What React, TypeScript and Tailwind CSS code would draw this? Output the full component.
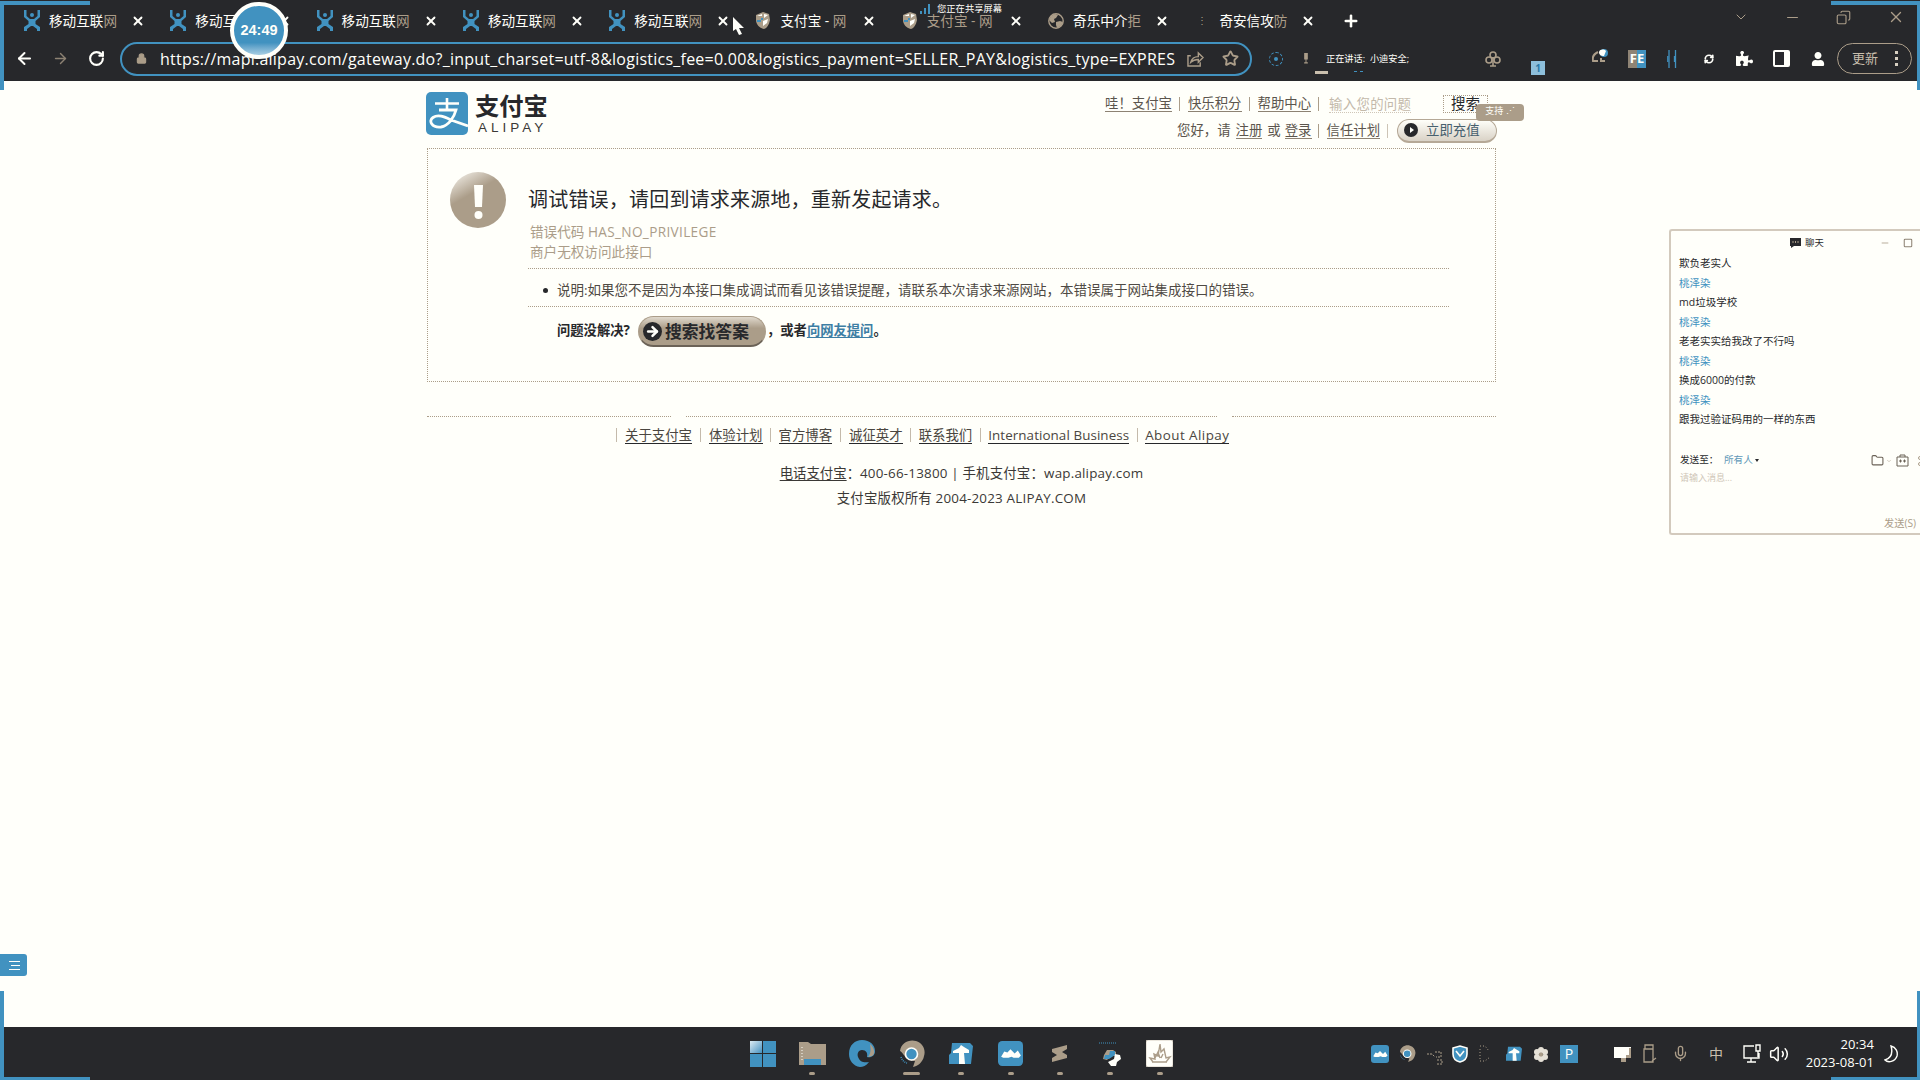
import React from "react";
import {
  ArrowLeft, ArrowRight, RotateCw, X, Plus, Minus, ChevronDown, Lock, Star, Volume2,
  Square, Copy, RefreshCw, Folder, Scissors, Mic,
} from "lucide-react";
import { FaPuzzlePiece, FaUser } from "react-icons/fa";

const sans = "font-['Open_Sans','Noto_Sans_CJK_SC',sans-serif]";

function PersonMark() {
  return (
    <svg viewBox="0 0 16 21" className="h-[21px] w-4 shrink-0">
      <path d="M0 0h2.500v6l3.500 3h4l3.500-3V0H16v7l-4.500 4v3l4.500 3v4h-3v-2l-4-3H7l-4 3v2H0v-4l4.500-3v-3L0 7z" fill="#4192c0" />
      <circle cx="8" cy="5" r="2" fill="#4192c0" />
    </svg>
  );
}

function GlobeMark() {
  return (
    <svg viewBox="0 0 16 16" className="h-4 w-4 shrink-0">
      <circle cx="8" cy="8" r="7.2" fill="#27282b" stroke="#ab9d89" strokeWidth="1.4" />
      <path d="M1 7l2-4 4-2 3 1-2 3-2 1 1 3-3 1zM8 9l4-1 3 1-2 4-4 2-1-3z" fill="#ab9d89" />
    </svg>
  );
}

function ShieldMark() {
  return (
    <svg viewBox="0 0 16 17" className="h-[17px] w-4 shrink-0">
      <path d="M1 3l7-3 6 2 1 6c-1 5-3 8-6 9-5-1-8-5-8-9z" fill="#ab9d89" />
      <path d="M2 4l5-2v2H2zM9 2l4 1-4 3zM8 9l5-2-1 4-4 3z" fill="#fffffa" />
      <path d="M2 8h4v2H2zM6 6h2v2H6z" fill="#4192c0" />
    </svg>
  );
}

const tabs = [
  { t: "移动互联", e: "网", i: "person" },
  { t: "移动互联", e: "网", i: "person" },
  { t: "移动互联", e: "网", i: "person" },
  { t: "移动互联", e: "网", i: "person" },
  { t: "移动互联", e: "网", i: "person" },
  { t: "支付宝 - ", e: "网", i: "shield" },
  { t: "支付宝 - ", e: "网", i: "shield" },
  { t: "奇乐中介", e: "拒", i: "globe" },
  { t: "奇安信攻", e: "防", i: "none" },
];

function TabStrip() {
  return (
    <div className="flex h-[41px] items-center pl-[24px]">
      {tabs.map((tab, k) => (
        <div key={k} className="flex w-[146.3px] shrink-0 items-center">
          {tab.i === "person" && <PersonMark />}
          {tab.i === "shield" && <ShieldMark />}
          {tab.i === "globe" && <GlobeMark />}
          {tab.i === "none" && <span className="w-4 text-center text-[10px] text-[#ab9d89]">⋮</span>}
          <div className={k === 6 ? "ml-[9px] w-[69px] whitespace-pre text-[13.6px] leading-5 text-[#ab9d89]" : "ml-[9px] w-[69px] whitespace-pre text-[13.6px] leading-5 text-[#fffffa]"}>
            {tab.t}
            <span className="text-[#ab9d89]">{tab.e}</span>
          </div>
          <X className="ml-[13px] h-[14px] w-[14px] text-[#fffffa]" strokeWidth={3.2} />
        </div>
      ))}
      <Plus className="ml-[1px] h-[18px] w-[18px] text-[#fffffa]" strokeWidth={3.4} />
      <div className="mb-[7px] ml-auto flex items-center pr-[15px] text-[#ab9d89]">
        <ChevronDown className="h-4 w-4" strokeWidth={1.5} />
        <Minus className="ml-[35px] h-[17px] w-[17px]" strokeWidth={1.5} />
        <Copy className="ml-[35px] h-[15px] w-[15px] -scale-x-100" strokeWidth={1.8} />
        <X className="ml-[36px] h-[18px] w-[18px]" strokeWidth={1.8} />
      </div>
    </div>
  );
}

function Toolbar() {
  return (
    <div className="flex h-[40px] items-center pb-[5px] pl-[15px]">
      <ArrowLeft className="h-[19px] w-[19px] text-[#fffffa]" strokeWidth={2.5} />
      <ArrowRight className="ml-[18px] h-[17px] w-[17px] text-[#8d8273]" strokeWidth={2} />
      <RotateCw className="ml-[19px] h-[17px] w-[17px] text-[#fffffa]" strokeWidth={3} />
      <div className="ml-[15px] flex h-[34px] w-[1132px] shrink-0 items-center rounded-full border-2 border-[#4192c0] pl-[14px]">
        <Lock className="h-[13px] w-[11px] text-[#ab9d89]" fill="#ab9d89" strokeWidth={2.5} />
        <span className="ml-[13px] w-[1018px] whitespace-nowrap text-[16px] leading-5 tracking-[0.24px] text-[#fffffa]">
          https://mapi.alipay.com/gateway.do?_input_charset=utf-8&amp;logistics_fee=0.00&amp;logistics_payment=SELLER_PAY&amp;logistics_type=EXPRES
        </span>
        <svg viewBox="0 0 18 17" className="ml-[9px] h-[16px] w-[17px] shrink-0" fill="none" stroke="#ab9d89" strokeWidth="1.5">
          <path d="M4 5H1v11h13v-4" />
          <path d="M4 12c1-4 4-6 8-6V2l5 5-5 5V9c-4 0-6 1-8 3z" />
        </svg>
        <Star className="ml-[18px] h-[17px] w-[17px] shrink-0 text-[#ab9d89]" strokeWidth={2.6} />
      </div>
      <div className="ml-[17px] flex h-[14px] w-[14px] shrink-0 items-center justify-center rounded-full border border-dashed border-[#4192c0]">
        <div className="h-1 w-1 rounded-full bg-[#4192c0]" />
      </div>
      <svg viewBox="0 0 6 12" className="ml-[20px] h-[11px] w-[6px] shrink-0" fill="#ab9d89">
        <path d="M1 0h4v7H1zM2.500 7h1v3h-1zM1 10h4v1.500H1z" />
      </svg>
      <span className="ml-[17px] w-[84px] shrink-0 whitespace-nowrap text-[9.2px] leading-4 text-[#fffffa]">
        正在讲话:&nbsp; 小迪安全;
      </span>
      <svg viewBox="0 0 16 16" className="ml-[75px] h-4 w-4 shrink-0" fill="none" stroke="#ab9d89" strokeWidth="1.6">
        <circle cx="8" cy="4" r="3" />
        <circle cx="4" cy="9" r="3" />
        <circle cx="12" cy="9" r="3" />
        <path d="M8 6v9M5 15h6" />
      </svg>
      <div className="mt-[19px] ml-[30px] flex h-[14px] w-[14px] shrink-0 items-center justify-center bg-[#8dbfdb] text-[10px] font-bold text-[#2b78a8]">1</div>
      <svg viewBox="0 0 18 14" className="mb-[6px] ml-[47px] h-[14px] w-[18px] shrink-0">
        <path d="M6 3C2 5 0 8 1 12h5M9 9v3h4" fill="none" stroke="#ab9d89" strokeWidth="2" />
        <circle cx="12" cy="4" r="4" fill="#4192c0" />
        <path d="M7 3c1-3 5-3 7-1l-2 5c-3 0-5-1-5-4z" fill="#fffffa" />
      </svg>
      <div className="ml-[18px] flex h-[18px] w-[18px] shrink-0 items-center justify-center bg-gradient-to-r from-[#8f8475] from-50% to-[#4192c0] to-50% text-[13px] leading-none font-bold text-[#fffffa]">FE</div>
      <svg viewBox="0 0 10 18" className="ml-[21px] h-[18px] w-[10px] shrink-0" stroke="#4192c0" strokeWidth="1.3">
        <path d="M2 0v18M8.500 0v18" />
        <path d="M.8 6v6M7.500 6v6" />
      </svg>
      <RefreshCw className="ml-[27px] h-[10px] w-[10px] shrink-0 text-[#fffffa]" strokeWidth={4} />
      <FaPuzzlePiece className="ml-[22px] h-[17px] w-[17px] shrink-0 text-[#fffffa]" />
      <div className="ml-[20px] h-[17px] w-[17px] shrink-0 rounded-[2px] border-2 border-r-[6px] border-[#fffffa]" />
      <FaUser className="ml-[21px] h-[14px] w-[14px] shrink-0 text-[#fffffa]" />
      <div className="ml-[12px] flex h-[31px] w-[75px] shrink-0 items-center rounded-full border border-[#ab9d89] pl-[14px] text-[13px] text-[#c9bfae]">
        更新
        <div className="ml-[17px] flex flex-col gap-[3px]">
          <i className="h-[3px] w-[3px] bg-[#d8d0c2]" />
          <i className="h-[3px] w-[3px] bg-[#d8d0c2]" />
          <i className="h-[3px] w-[3px] bg-[#d8d0c2]" />
        </div>
      </div>
    </div>
  );
}

function AlipayLogo() {
  return (
    <div className="flex w-[124px] shrink-0 items-start pt-[11px]">
      <svg viewBox="0 0 42 43" className="-ml-[1px] h-[43px] w-[42px] shrink-0">
        <rect width="42" height="43" rx="5" fill="#4192c0" />
        <g fill="none" stroke="#fffffa">
          <path d="M9 11.500h24M21 6v11" strokeWidth="2.600" />
          <path d="M13 18h17c-2 8-8 16-15 17-9 1-13-6-8-9.500 5-3.500 11-1 18 2.500l17 6" strokeWidth="2.800" />
        </g>
      </svg>
      <div className="ml-[7px] flex flex-col">
        <span className="mt-[1px] whitespace-nowrap text-[24.3px] leading-[26px] font-bold text-[#27282b]">支付宝</span>
        <span className="ml-[3px] font-['Liberation_Sans',sans-serif] text-[13.5px] leading-[17px] tracking-[4px] text-[#3b3936]">ALIPAY</span>
      </div>
    </div>
  );
}

function Bar({ className }: { className: string }) {
  return <i className={"h-[14px] w-px shrink-0 bg-[#ab9d89] " + className} />;
}

const headLink = "shrink-0 border-b border-[#8d8273] leading-[15px] whitespace-nowrap";

function PageHeader() {
  return (
    <div className="flex h-[67px] justify-between">
      <AlipayLogo />
      <div className="relative flex w-[391px] flex-col text-[13.4px] text-[#5b554d]">
        <div className="mt-[12px] flex h-[22px] items-center">
          <span className={headLink}>哇！支付宝</span>
          <Bar className="ml-[7px]" />
          <span className={"ml-[8px] " + headLink}>快乐积分</span>
          <Bar className="ml-[7px]" />
          <span className={"ml-[8px] " + headLink}>帮助中心</span>
          <Bar className="ml-[7px]" />
          <span className="ml-[10px] w-[82px] border-b border-dotted border-[#cfc6b8] leading-[16px] tracking-[0.3px] whitespace-nowrap text-[#c3b9aa]">输入您的问题</span>
          <span className="ml-[32px] w-[45px] border border-dotted border-[#ab9d89] pl-[7px] text-[14.5px] leading-[16px] text-[#27282b]">搜索</span>
        </div>
        <div className="mt-[4px] flex h-[23px] items-center pl-[72px]">
          <span className="whitespace-nowrap">您好，请</span>
          <span className={"ml-[5px] " + headLink}>注册</span>
          <span className="ml-[5px]">或</span>
          <span className={"ml-[4px] " + headLink}>登录</span>
          <Bar className="ml-[6px]" />
          <span className={"ml-[8px] " + headLink}>信任计划</span>
          <Bar className="ml-[7px] opacity-60" />
          <div className="ml-[9px] flex h-[24px] w-[100px] shrink-0 items-center rounded-full border border-b-2 border-[#b5a896] bg-gradient-to-b from-[#fffffa] to-[#d9d2c6] pl-[6px]">
            <span className="flex h-[14px] w-[14px] items-center justify-center rounded-full bg-[#27282b]">
              <i className="ml-[1px] h-0 w-0 border-y-[3.5px] border-l-[4px] border-y-transparent border-l-[#fffffa]" />
            </span>
            <span className="ml-[8px] text-[#47606e]">立即充值</span>
          </div>
        </div>
        <div className="absolute top-[23px] left-[371px] h-[17px] w-[48px] rounded-[4px] bg-[#ab9d89] text-center text-[9px] leading-[14px] text-[#fffffa]">
          支持 ⋰
        </div>
      </div>
    </div>
  );
}

function ErrorPanel() {
  return (
    <div className="h-[234px] border border-dotted border-[#ab9d89] pt-[23px] pl-[22px]">
      <div className="flex">
        <svg viewBox="0 0 56 56" className="h-[56px] w-[56px] shrink-0">
          <defs>
            <linearGradient id="disc" x1="0.25" y1="0" x2="0.45" y2="0.35">
              <stop offset="0" stopColor="#e9e4db" />
              <stop offset="1" stopColor="#ab9d89" />
            </linearGradient>
          </defs>
          <circle cx="28" cy="28" r="28" fill="url(#disc)" />
          <path d="M24 13h9l-1 22h-7z" fill="#fffffa" />
          <circle cx="28.500" cy="43" r="4" fill="#fffffa" />
        </svg>
        <div className="ml-[22px] w-[921px]">
          <h1 className="mt-[13px] text-[20px] leading-[30px] tracking-[0.2px] text-[#27282b]">
            调试错误，请回到请求来源地，重新发起请求。
          </h1>
          <div className="mt-[7px] h-[47px] border-b border-dotted border-[#ab9d89] pl-[2px] text-[13.6px] leading-[20px] text-[#ab9d89]">
            <p>错误代码 <span className="tracking-[0.35px]">HAS_NO_PRIVILEGE</span></p>
            <p>商户无权访问此接口</p>
          </div>
          <div className="flex h-[38px] items-center border-b border-dotted border-[#ab9d89] pt-[5px] pl-[15px] text-[13.5px] text-[#4f4a44]">
            <i className="h-[5px] w-[5px] rounded-full bg-[#27282b]" />
            <span className="ml-[9px] whitespace-nowrap">
              说明:如果您不是因为本接口集成调试而看见该错误提醒，请联系本次请求来源网站，本错误属于网站集成接口的错误。
            </span>
          </div>
          <div className="mt-[8px] flex items-center pl-[29px] text-[13.3px] font-bold text-[#27282b]">
            <span className="w-[81px] whitespace-nowrap">问题没解决?</span>
            <div className="mt-[1px] flex h-[31px] w-[128px] items-center rounded-full border border-[#ab9d89] border-b-2 border-b-[#6b6257] bg-gradient-to-b from-[#e0d9cd] to-[#ab9d89] to-40% pl-[4px]">
              <span className="flex h-[19px] w-[19px] items-center justify-center rounded-full bg-[#27282b]">
                <ArrowRight className="h-[15px] w-[15px] text-[#fffffa]" strokeWidth={4} />
              </span>
              <span className="ml-[3px] pt-[1px] text-[16.8px] whitespace-nowrap">搜索找答案</span>
            </div>
            <span className="ml-[1px] whitespace-nowrap">
              ，或者<span className="text-[#3d7ea4] underline decoration-1 underline-offset-2">向网友提问</span>。
            </span>
          </div>
        </div>
      </div>
    </div>
  );
}

const footLink = "border-b border-[#27282b] leading-[16px] whitespace-nowrap";

function PageFooter() {
  return (
    <div className="mt-[34px] text-[13.4px] text-[#4a4640]">
      <div className="flex gap-[15px]">
        <i className="h-px w-[244px] border-t border-dotted border-[#ab9d89]" />
        <i className="h-px flex-1 border-t border-dotted border-[#ab9d89]" />
        <i className="h-px w-[264px] border-t border-dotted border-[#ab9d89]" />
      </div>
      <div className="mt-[7px] flex h-[22px] items-center pl-[189px]">
        <Bar className="mr-[8px] opacity-70" />
        <span className={footLink}>关于支付宝</span>
        <Bar className="mx-[8px] opacity-70" />
        <span className={footLink}>体验计划</span>
        <Bar className="mr-[8px] ml-[7px] opacity-70" />
        <span className={footLink}>官方博客</span>
        <Bar className="mx-[8px] opacity-70" />
        <span className={footLink}>诚征英才</span>
        <Bar className="mx-[7.5px] opacity-70" />
        <span className={footLink}>联系我们</span>
        <Bar className="mx-[7.5px] opacity-70" />
        <span className={footLink + " tracking-[0.08px]"}>International Business</span>
        <Bar className="mx-[7.5px] opacity-70" />
        <span className={footLink + " tracking-[0.45px]"}>About Alipay</span>
      </div>
      <p className="mt-[15px] text-center leading-[24px] text-[#3b3936]">
        <span className="underline underline-offset-2">电话支付宝</span>：<span className="tracking-[0.2px]">400-66-13800 | 手机支付宝：wap.alipay.com</span>
      </p>
      <p className="mt-[1px] text-center leading-[24px] tracking-[0.2px] text-[#3b3936]">支付宝版权所有 2004-2023 ALIPAY.COM</p>
    </div>
  );
}

const messages = [
  { m: "欺负老实人" },
  { n: "桃泽染" },
  { m: "md垃圾学校" },
  { n: "桃泽染" },
  { m: "老老实实给我改了不行吗" },
  { n: "桃泽染" },
  { m: "换成6000的付款" },
  { n: "桃泽染" },
  { m: "跟我过验证码用的一样的东西" },
];

function ChatWindow() {
  return (
    <div className="absolute top-[229px] left-[1669px] flex h-[306px] w-[251px] flex-col overflow-hidden rounded-l-[3px] border-2 border-r-0 border-[#d3cabd] bg-[#fffffa] text-[#27282b]">
      <div className="flex h-[23px] items-center pl-[119px]">
        <svg viewBox="0 0 11 10" className="h-[10px] w-[11px]">
          <path d="M0 0h11v8H4l-3 2V8H0z" fill="#27282b" />
          <path d="M3 3v2M5.500 3v2M8 3v2" stroke="#ab9d89" />
        </svg>
        <span className="ml-[4px] w-[75px] pt-px text-[9.4px]">聊天</span>
        <Minus className="h-[10px] w-[10px] text-[#ab9d89]" />
        <Square className="ml-[13px] h-[10px] w-[10px] text-[#8d8273]" strokeWidth={2.5} />
      </div>
      <div className="flex flex-col pl-[8px] text-[10.5px]">
        {messages.map((x, k) => (
          <p key={k} className={x.n ? "h-[19.5px] leading-[19.5px] text-[#4192c0]" : "h-[19.5px] leading-[19.5px] text-[#27282b]"}>
            {x.n || x.m}
          </p>
        ))}
      </div>
      <div className="mt-[22px] flex h-[18px] items-center pl-[9px] text-[9.6px]">
        <span className="w-[44px] shrink-0">发送至：</span>
        <span className="w-[31px] shrink-0 text-[#5f98b8]">所有人</span>
        <i className="shrink-0 border-x-[2px] border-t-[3px] border-x-transparent border-t-[#27282b]" />
        <Folder className="ml-[112px] h-[13px] w-[13px] shrink-0 text-[#6b6257]" />
        <ChevronDown className="ml-[2px] h-[6px] w-[6px] shrink-0 text-[#ab9d89]" />
        <svg viewBox="0 0 13 13" className="ml-[4px] h-[13px] w-[13px] shrink-0" fill="none" stroke="#6b6257">
          <path d="M1 3h11v9H1zM4 3V1h5v2M3 7h3M4.500 5.500v3M7 7h3M8.500 5.500v3" />
        </svg>
        <Scissors className="ml-[8px] h-[12px] w-[12px] shrink-0 text-[#ab9d89]" />
      </div>
      <div className="pl-[9px] text-[9px] leading-[16px] text-[#cfc6b8]">请输入消息...</div>
      <div className="mt-auto mb-[2px] pr-[4px] text-right text-[10.2px] leading-[16px] text-[#ab9d89]">发送(S)</div>
    </div>
  );
}

function Slot({ children, bar }: { children: React.ReactNode; bar: string }) {
  return (
    <div className="flex w-[49.6px] flex-col items-center">
      <div className="flex h-[28px] items-center justify-center">{children}</div>
      <i className={"mt-[4px] h-[3px] rounded-full bg-[#ab9d89] " + bar} />
    </div>
  );
}

function UpMark({ className }: { className: string }) {
  return (
    <svg viewBox="0 0 24 22" className={className}>
      <path d="M3 0h18l3 3-2 18H0V12L2 10z" fill="#4192c0" />
      <path d="M12 2l3 2 5 3v3h-5l1 11h-6V10H4V8l6-3z" fill="#fffffa" />
    </svg>
  );
}

function WaveMark({ className }: { className: string }) {
  return (
    <svg viewBox="0 0 24 24" className={className}>
      <rect width="24" height="24" rx="4" fill="#4192c0" />
      <path d="M3 15l3-5 3 1 3-3 4 4 3-3 3 5-2 2h-5l-2-1-3 1H5z" fill="#fffffa" />
    </svg>
  );
}

function ChromeMark({ className }: { className: string }) {
  return (
    <svg viewBox="0 0 26 27" className={className}>
      <path d="M1 11C2 3 10-1 17 1c7 2 10 9 8 15-1 6-6 10-11 11l2-6C5 20 6 14 1 11z" fill="#ab9d89" />
      <path d="M2 17c1 3 3 5 6 6" stroke="#4192c0" strokeWidth="1.500" strokeDasharray="1 1" fill="none" />
      <circle cx="12.500" cy="14" r="6" fill="#4192c0" stroke="#fffffa" strokeWidth="1.600" />
    </svg>
  );
}

function Taskbar() {
  return (
    <div className="relative flex h-[53px] items-center bg-[#27282b]">
      <div className="flex pt-[7px] pl-[738px]">
        <Slot bar="w-0">
          <div className="grid h-[26px] w-[26px] grid-cols-2 gap-px">
            <i className="bg-gradient-to-br from-[#dcebf2] to-[#4192c0]" />
            <i className="bg-[#4192c0]" />
            <i className="bg-[#4192c0]" />
            <i className="bg-[#4192c0]" />
          </div>
        </Slot>
        <Slot bar="w-[6px]">
          <svg viewBox="0 0 27 25" className="h-[25px] w-[27px]">
            <path d="M0 1h9l3 2h15v21h-5v-6H5v6H0z" fill="#ab9d89" />
            <path d="M5 18h17v6H5z" fill="#4192c0" />
            <path d="M3 6v15" stroke="#fffffa" strokeDasharray="1 2" />
          </svg>
        </Slot>
        <Slot bar="w-0">
          <svg viewBox="0 0 26 27" className="h-[27px] w-[26px]">
            <path d="M0 14C0 5 6 0 13 0c8 0 13 5 13 11 0 5-4 7-8 6 1-4-1-7-5-7-4 0-5 4-4 7 2 5 6 6 11 5-3 4-6 5-9 5C4 26 0 20 0 14z" fill="#4192c0" />
            <path d="M21 4c4 3 6 10 2 12l-4 1c3-4 3-8 2-13z" fill="#ab9d89" />
          </svg>
        </Slot>
        <Slot bar="w-[17px]"><ChromeMark className="h-[27px] w-[26px]" /></Slot>
        <Slot bar="w-[6px]"><UpMark className="h-[22px] w-[24px]" /></Slot>
        <Slot bar="w-[6px]"><WaveMark className="h-[25px] w-[25px]" /></Slot>
        <Slot bar="w-[6px]">
          <svg viewBox="0 0 16 17" className="h-[17px] w-[16px]">
            <path d="M15 0v4l-5 3 5 3v3L0 17v-4l5-3-5-3V4z" fill="#ab9d89" />
          </svg>
        </Slot>
        <Slot bar="w-[6px]">
          <svg viewBox="0 0 24 27" className="h-[27px] w-[24px]">
            <path d="M1 3h18" stroke="#4192c0" strokeDasharray="1 1" />
            <path d="M9 10h6l3 2v4h-5l-4 4-4-1 1-4z" fill="#ab9d89" />
            <path d="M12 11h5v4l-6 4H6l1-4h4z" fill="#4192c0" />
            <path d="M17 14l5 1 1 4-4 3-1 4h-5l-3-4 6-3z" fill="#fffffa" />
          </svg>
        </Slot>
        <Slot bar="w-[6px]">
          <svg viewBox="0 0 27 27" className="h-[27px] w-[27px]">
            <rect width="27" height="27" rx="2" fill="#fffffa" stroke="#d5cdc0" />
            <path d="M14 4l1 8 3-3 2 9 4-1-4 5H7l-3-4 5 1-1-5 4 2zM6 22h15M9 18l3-6 2 6M15 18l2-4" fill="none" stroke="#ab9d89" strokeWidth="1.400" />
          </svg>
        </Slot>
      </div>
      <div className="ml-auto flex items-center pr-[22px] text-[#fffffa]">
        <WaveMark className="h-[18px] w-[18px]" />
        <ChromeMark className="ml-[10px] h-[17px] w-[17px]" />
        <svg viewBox="0 0 16 14" className="mt-2 ml-[11px] h-[14px] w-[16px]" fill="none" stroke="#ab9d89" strokeDasharray="2 1">
          <path d="M0 3h5l3 3M8 1h6v5H9M10 9h5v4h-5" />
        </svg>
        <svg viewBox="0 0 16 18" className="ml-[9px] h-[18px] w-[16px]">
          <path d="M1 3l7-2 7 2v6c0 4-3 7-7 8-4-1-7-4-7-8z" fill="#4192c0" stroke="#fffffa" strokeWidth="1.600" />
          <path d="M4 6l4 5 4-5" fill="none" stroke="#fffffa" strokeWidth="1.600" />
        </svg>
        <svg viewBox="0 0 12 18" className="ml-[11px] h-[18px] w-[12px]" fill="none" stroke="#ab9d89" strokeDasharray="1 2">
          <path d="M1 1h5l4 5M1 4v12h5l5-4" />
        </svg>
        <UpMark className="ml-[15px] h-[16px] w-[16px]" />
        <svg viewBox="0 0 16 16" className="ml-[11px] h-4 w-4" fill="#e6e1d7">
          <circle cx="8" cy="4" r="3" /><circle cx="12" cy="6" r="3" /><circle cx="12" cy="11" r="3" />
          <circle cx="8" cy="13" r="3" /><circle cx="4" cy="11" r="3" /><circle cx="4" cy="6" r="3" />
          <circle cx="8" cy="8.500" r="2" fill="#ab9d89" />
        </svg>
        <div className="ml-[11px] flex h-[18px] w-[18px] items-center justify-center bg-[#4192c0] text-[14px] leading-none">P</div>
        <svg viewBox="0 0 18 18" className="ml-[36px] h-[18px] w-[18px]">
          <path d="M0 2h17v11H0z" fill="#fffffa" />
          <path d="M12 10h5v3h-5zM7 13h5v4H7zM15 3h2v7h-2z" fill="#ab9d89" />
        </svg>
        <svg viewBox="0 0 14 19" className="ml-[11px] h-[19px] w-[14px]" fill="none" stroke="#ab9d89" strokeWidth="1.300">
          <path d="M2 1h8v4H2zM1 5h9v13H1zM9 17l4-3" />
        </svg>
        <Mic className="ml-[15px] h-[19px] w-[17px] text-[#ab9d89]" strokeWidth={1.9} />
        <span className="ml-[20px] w-[16px] text-[14px] text-[#c9bfae]">中</span>
        <svg viewBox="0 0 18 19" className="ml-[18px] h-[19px] w-[18px]" fill="none" stroke="#fffffa" strokeWidth="1.400">
          <path d="M11 2H1v12h15V9M4 18h9M8 14v4M13 1h4v6h-4zM15 7v6" />
        </svg>
        <Volume2 className="ml-[8px] h-[20px] w-[20px]" strokeWidth={1.8} />
        <div className="ml-[11px] flex w-[74px] flex-col text-right text-[13px] leading-[17.5px] tracking-[0.05px] whitespace-nowrap">
          <span>20:34</span>
          <span>2023-08-01</span>
        </div>
        <svg viewBox="0 0 14 18" className="ml-[10px] h-[18px] w-[14px]" fill="none" stroke="#fffffa" strokeWidth="1.400">
          <path d="M7 1c5 1 7 6 6 10-2 6-9 7-12 4 6-2 8-7 6-14z" />
        </svg>
      </div>
    </div>
  );
}

export default function App() {
  return (
    <div className={"relative flex h-[1080px] w-[1920px] flex-col overflow-hidden bg-[#fffffa] " + sans}>
      <div className="h-[81px] bg-[#27282b]">
        <TabStrip />
        <Toolbar />
      </div>
      <main className="flex-1">
        <div className="ml-[427px] w-[1069px]">
          <PageHeader />
          <ErrorPanel />
          <PageFooter />
        </div>
      </main>
      <Taskbar />

      <ChatWindow />
      <div className="absolute top-[954px] left-0 flex h-[22px] w-[27px] flex-col items-center justify-center gap-[3px] rounded-r-[3px] bg-[#4192c0]">
        <i className="ml-px h-px w-[11px] bg-[#fffffa]" />
        <i className="ml-1 h-px w-[9px] bg-[#fffffa]" />
        <i className="ml-px h-px w-[11px] bg-[#fffffa]" />
      </div>
      <div className="absolute top-[2px] left-[230px] flex h-[57px] w-[58px] items-center justify-center rounded-full border-4 border-[#fffffa] bg-gradient-to-b from-[#4192c0] from-75% to-[#a9cfe3] font-['Liberation_Sans',sans-serif] text-[14.5px] font-bold text-[#fffffa]">
        24:49
      </div>
      <div className="absolute top-[3px] left-[919px] flex items-center text-[9.3px] leading-[12px] text-[#fffffa]">
        <svg viewBox="0 0 12 10" className="h-[10px] w-[12px]" fill="#4192c0">
          <path d="M1 7h2v3H1zM5 4h2v6H5zM9 0h2v10H9z" />
        </svg>
        <span className="ml-[6px]">您正在共享屏幕</span>
      </div>
      <svg viewBox="0 0 12 18" className="absolute top-[17px] left-[733px] h-[18px] w-[12px]">
        <path d="M0 0v14l3-2 3 6 3-1-3-6h5z" fill="#fffffa" />
      </svg>
      <div className="absolute top-[71px] left-[1315px] h-[3px] w-[13px] bg-[#c9bfae]" />
      <div className="absolute top-[71px] left-[1354px] h-[3px] w-[9px] border-t border-dashed border-[#4192c0]" />

      <div className="absolute top-[1px] left-0 h-[89px] w-[90px] border-t-4 border-l-4 border-[#4192c0]" />
      <div className="absolute top-[1px] right-0 h-[89px] w-[89px] border-t-4 border-r-[3px] border-[#4192c0]" />
      <div className="absolute bottom-0 left-0 h-[89px] w-[90px] border-b-[3px] border-l-4 border-[#4192c0]" />
      <div className="absolute right-0 bottom-0 h-[89px] w-[89px] border-r-[3px] border-b-[3px] border-[#4192c0]" />
    </div>
  );
}
